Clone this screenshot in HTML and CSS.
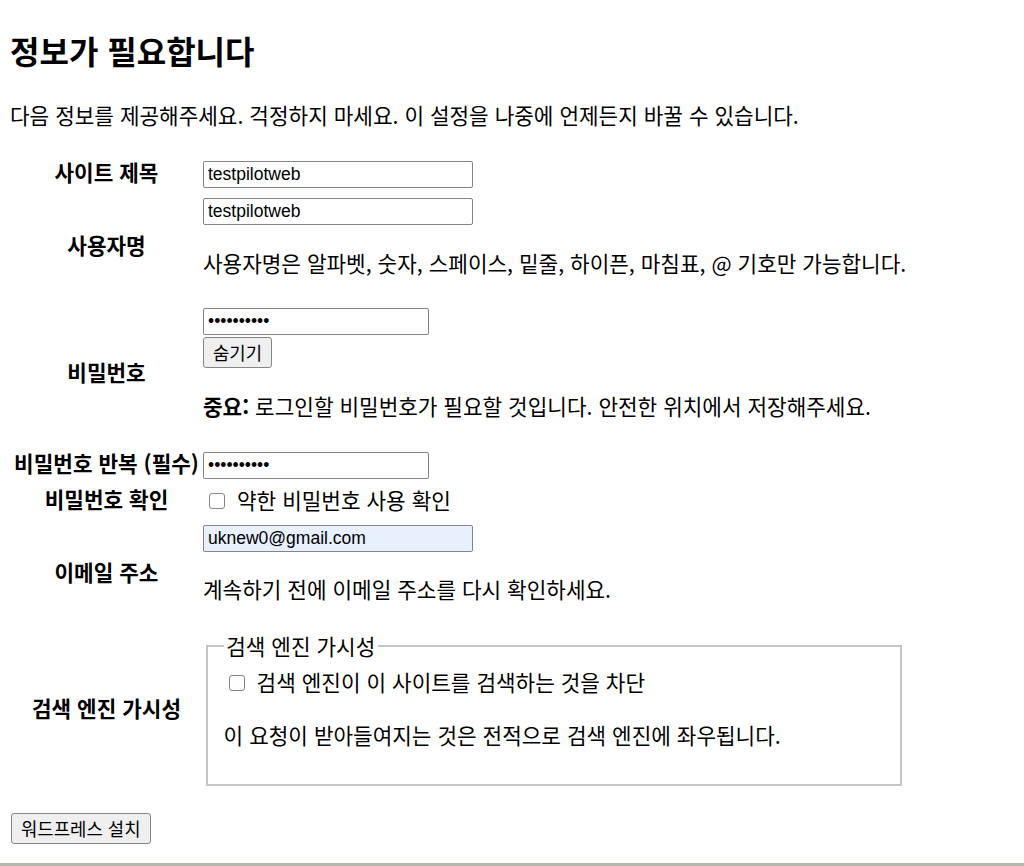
FILE: index.html
```html
<!DOCTYPE html>
<html lang="ko">
<head>
<meta charset="utf-8">
<title>워드프레스 설치</title>
<link rel="stylesheet" href="styles.css">
</head>
<body>
<h1>정보가 필요합니다</h1>
<p class="intro">다음 정보를 제공해주세요. 걱정하지 마세요. 이 설정을 나중에 언제든지 바꿀 수 있습니다.</p>
<form class="setup">
  <table class="form-table">
    <tr class="r1">
      <th>사이트 제목</th>
      <td><input class="field wide" type="text" value="testpilotweb"></td>
    </tr>
    <tr class="r2">
      <th>사용자명</th>
      <td>
        <input class="field wide" type="text" value="testpilotweb">
        <p class="desc">사용자명은 알파벳, 숫자, 스페이스, 밑줄, 하이픈, 마침표, @ 기호만 가능합니다.</p>
      </td>
    </tr>
    <tr class="r3">
      <th>비밀번호</th>
      <td>
        <input class="field narrow" type="password" value="abcdefghij">
        <button type="button" class="btn btn-hide">숨기기</button>
        <p class="desc"><strong>중요:</strong> 로그인할 비밀번호가 필요할 것입니다. 안전한 위치에서 저장해주세요.</p>
      </td>
    </tr>
    <tr class="r4">
      <th>비밀번호 반복 (필수)</th>
      <td><input class="field narrow" type="password" value="abcdefghij"></td>
    </tr>
    <tr class="r5">
      <th>비밀번호 확인</th>
      <td><label class="check"><input type="checkbox" class="box"><span>약한 비밀번호 사용 확인</span></label></td>
    </tr>
    <tr class="r6">
      <th>이메일 주소</th>
      <td>
        <input class="field wide autofill" type="email" value="uknew0@gmail.com">
        <p class="desc">계속하기 전에 이메일 주소를 다시 확인하세요.</p>
      </td>
    </tr>
    <tr class="r7">
      <th>검색 엔진 가시성</th>
      <td>
        <fieldset class="visibility">
          <legend>검색 엔진 가시성</legend>
          <label class="check fs-check"><input type="checkbox" class="box"><span>검색 엔진이 이 사이트를 검색하는 것을 차단</span></label>
          <p class="fs-note">이 요청이 받아들여지는 것은 전적으로 검색 엔진에 좌우됩니다.</p>
        </fieldset>
      </td>
    </tr>
  </table>
  <div class="submit"><button type="submit" class="btn">워드프레스 설치</button></div>
</form>
<div class="window-edge"></div>
</body>
</html>
```

FILE: styles.css
```css
html, body {
  background: #fff;
}
body {
  margin: 10px;
  font-family: "Noto Sans CJK KR", "Noto Sans", sans-serif;
  font-size: 21.3px;
  line-height: 26px;
  color: #000;
}
h1 {
  font-size: 32px;
  line-height: 40px;
  font-weight: 700;
  margin: 20px 0 0;
}
.intro {
  margin: 32px 0 0;
}
.form-table {
  border-collapse: collapse;
  border-spacing: 0;
  margin-top: 28px;
}
.form-table th {
  width: 187px;
  padding: 0 3px 5px 3px;
  text-align: center;
  vertical-align: middle;
  white-space: nowrap;
  font-weight: 700;
}
.form-table td {
  padding: 0;
  vertical-align: top;
}
.field {
  display: block;
  box-sizing: border-box;
  height: 27px;
  margin: 0;
  padding: 0 3px 0 4px;
  border: 1px solid #858585;
  border-radius: 2px;
  background: #fff;
  font-family: "Liberation Sans", Arial, sans-serif;
  font-size: 17.5px;
  line-height: 25px;
  color: #000;
  outline: none;
}
.wide { width: 270px; }
.narrow { width: 226px; }
.autofill { background: #e8f0fe; }
.btn {
  display: block;
  box-sizing: border-box;
  height: 31px;
  margin: 0;
  padding: 0 9px;
  border: 1px solid #858585;
  border-radius: 3px;
  background: #efefef;
  font-family: "Noto Sans CJK KR", sans-serif;
  font-size: 17.8px;
  line-height: 29px;
  color: #000;
}
.btn-hide { margin-top: 2px; }
.desc { margin: 0; }
.r1 td { padding: 5px 0 5px; }
.r2 td { padding-top: 5px; }
.r2 .desc { margin: 25px 0 25px; }
.r3 td { padding-top: 7px; }
.r3 .desc { margin: 25px 0 29px; }
.r4 td { padding: 4px 0 4px; }
.r5 td { padding: 4px 0 6px; }
.r6 td { padding-top: 6px; }
.r6 .desc { margin: 24px 0 27px; }
.r7 td { padding: 5px 0 5px; }
.check {
  display: flex;
  align-items: center;
  line-height: 26px;
}
.box {
  appearance: none;
  -webkit-appearance: none;
  box-sizing: border-box;
  width: 16px;
  height: 16px;
  margin: 1px 12px 0 6px;
  border: 1px solid #858585;
  border-radius: 3px;
  background: #fff;
  flex: none;
}
.visibility {
  box-sizing: border-box;
  width: 696px;
  margin: 0 0 0 3px;
  padding: 0 15.6px 13px;
  border: 2px solid #c6c6c6;
  min-width: 0;
}
.visibility legend {
  padding: 0 2.6px;
  line-height: 24px;
}
.fs-check {
  margin-top: 11px;
}
.fs-check .box { margin-left: 5px; }
.fs-note {
  margin: 27px 0 23px;
}
.submit {
  display: flex;
  margin-top: 22px;
  padding-left: 1px;
}
.window-edge {
  position: fixed;
  left: 0;
  right: 0;
  bottom: 0;
  height: 3px;
  background: #b6b8ae;
}
```
